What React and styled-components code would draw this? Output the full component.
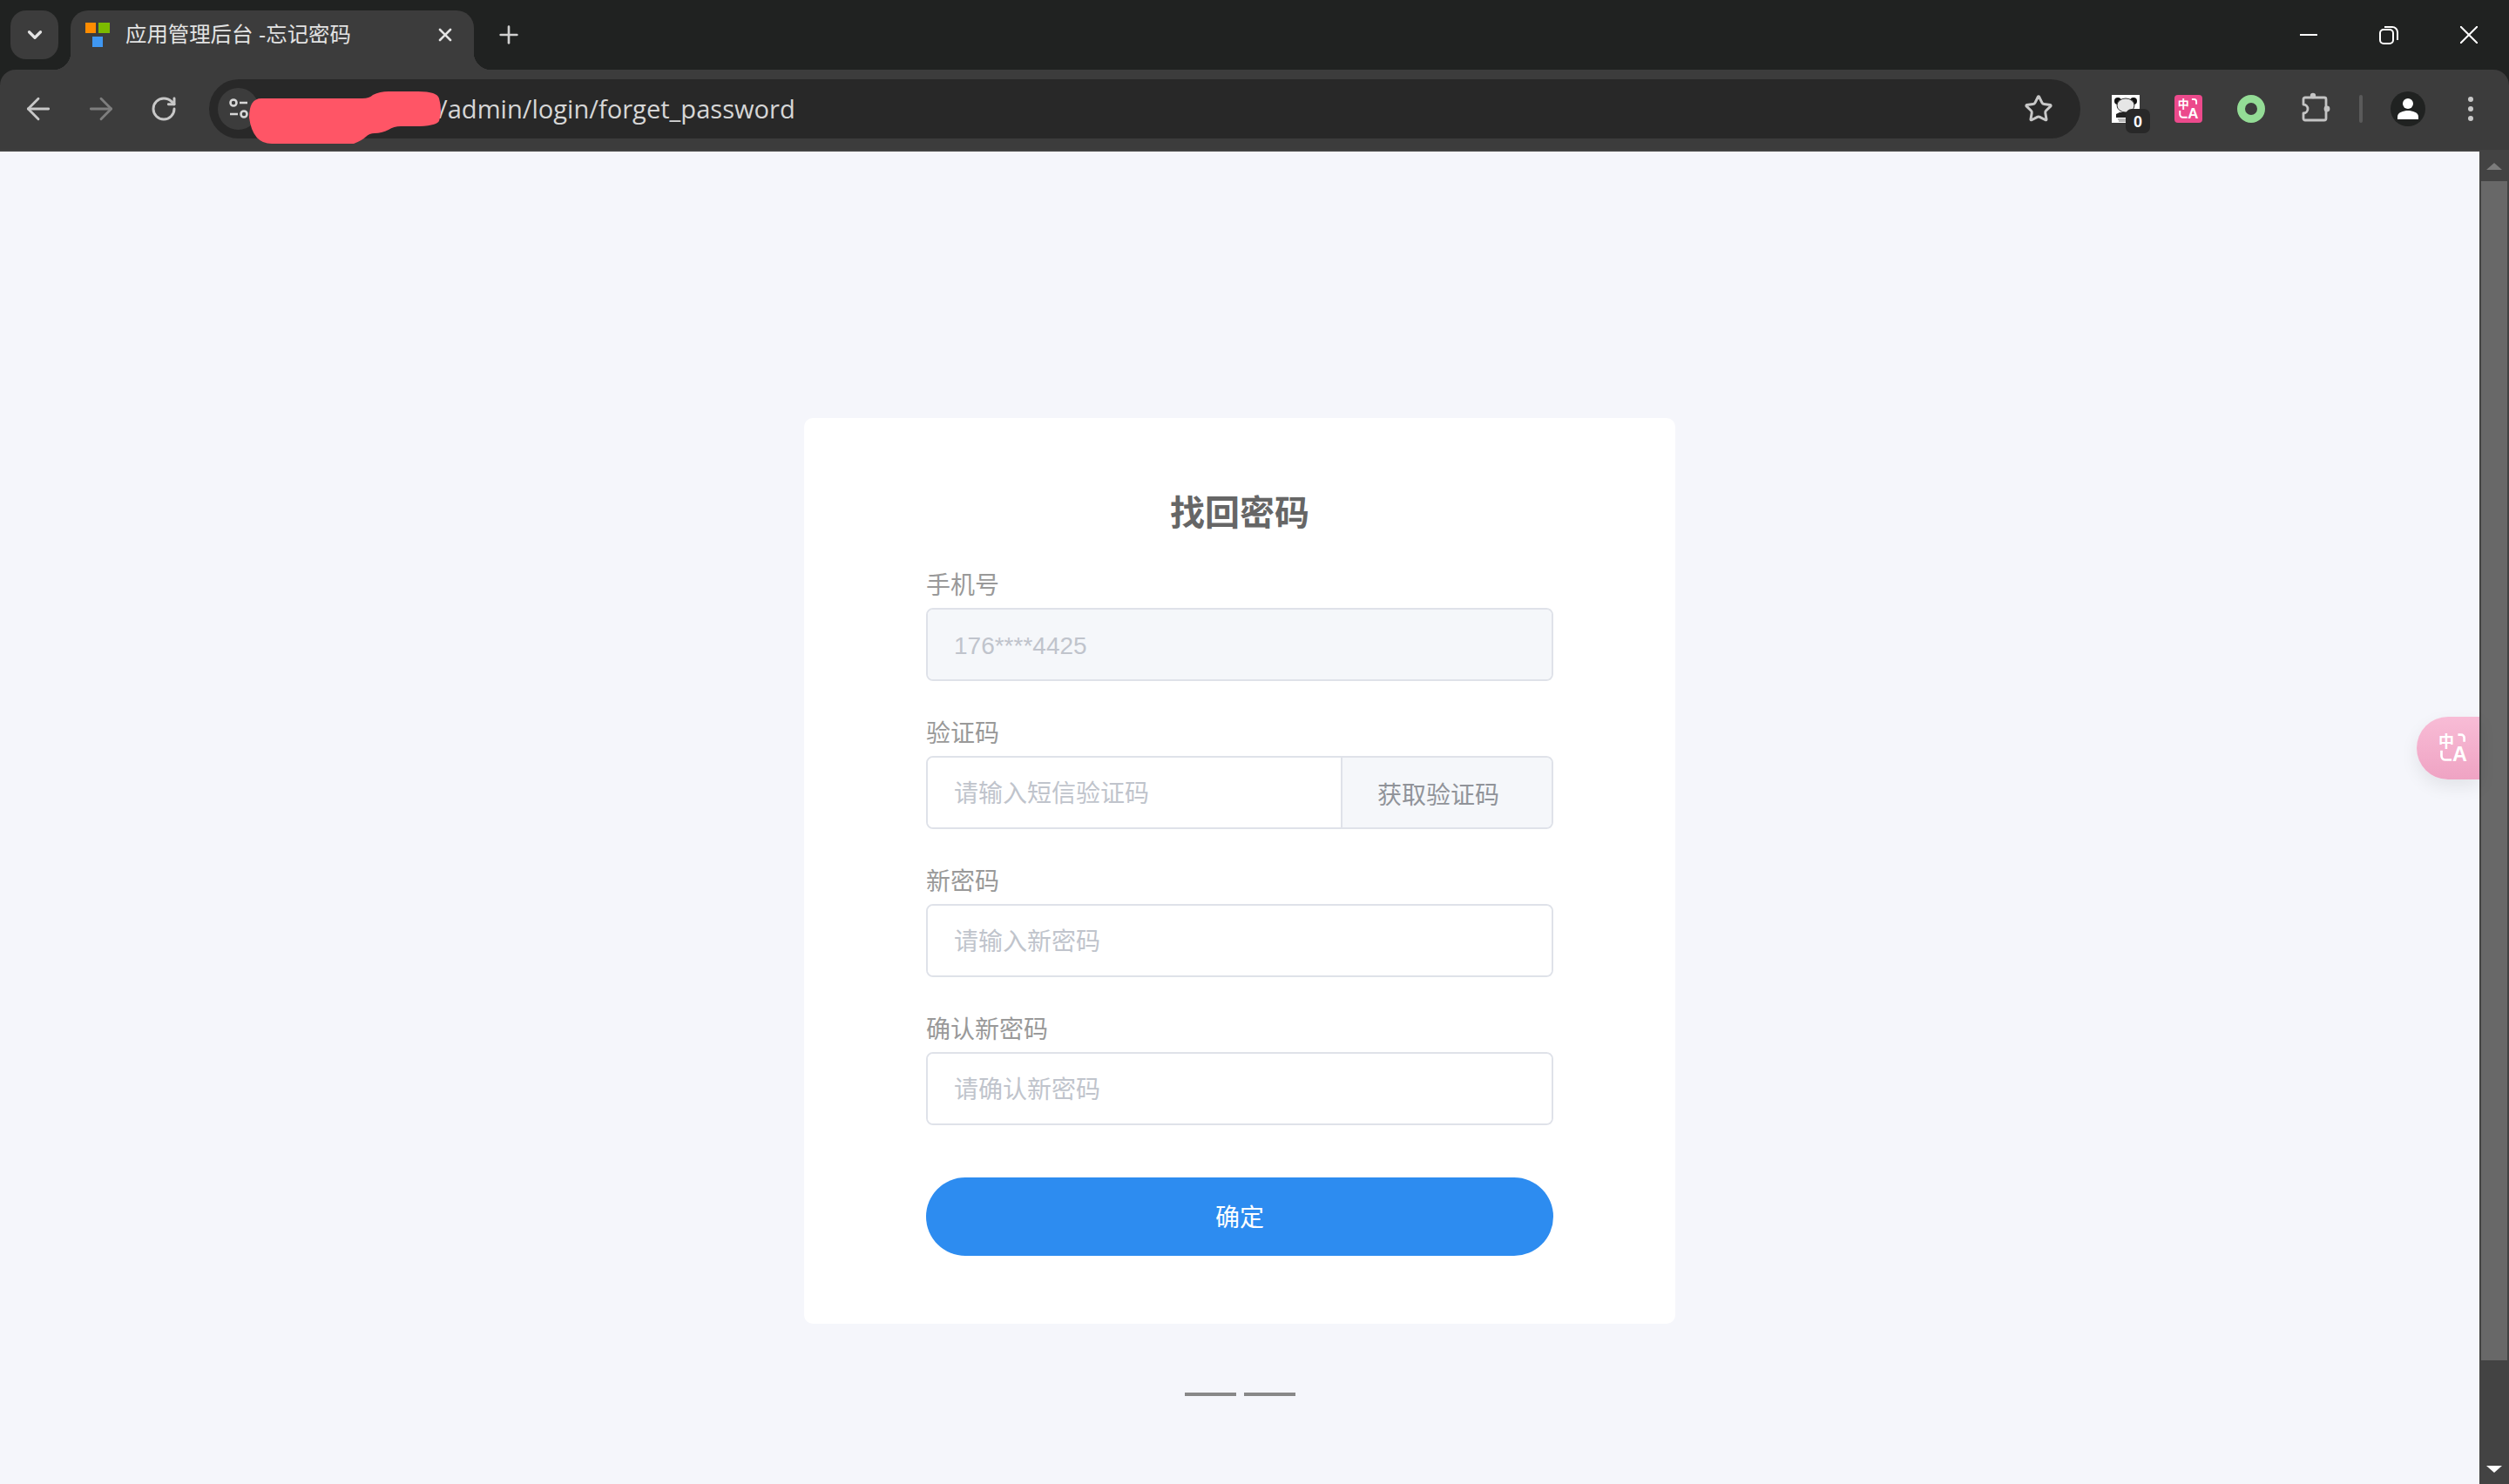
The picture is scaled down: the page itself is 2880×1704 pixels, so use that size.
import styled, { createGlobalStyle } from "styled-components";
import { ArrowLeft, ArrowRight, ChevronDown, Plus, RotateCw, Star, X } from "lucide-react";

const GlobalStyle = createGlobalStyle`
  html, body {
    margin: 0;
    padding: 0;
    background: #f5f6fb;
  }
  * {
    box-sizing: border-box;
  }
  body {
    font-family: "Liberation Sans", "Noto Sans CJK SC", sans-serif;
  }
`;

const Window = styled.div`
  display: flex;
  flex-direction: column;
  width: 2880px;
  height: 1704px;
  overflow: hidden;
  background: #202221;
`;

const TabStrip = styled.div`
  display: flex;
  align-items: flex-start;
  height: 80px;
  padding: 12px 0 0 12px;
  background: #202221;
`;

const TabSearch = styled.div`
  display: flex;
  align-items: center;
  justify-content: center;
  width: 55px;
  height: 56px;
  border-radius: 18px;
  background: #3c3c3c;
  color: #e3e3e3;
`;

const Tab = styled.div`
  position: relative;
  display: flex;
  align-items: center;
  width: 463px;
  height: 68px;
  margin-left: 14px;
  padding: 0 21px 12px 17px;
  border-radius: 20px 20px 0 0;
  background: #3c3c3c;
  color: #e3e3e3;

  &::before,
  &::after {
    content: "";
    position: absolute;
    bottom: 0;
    width: 20px;
    height: 20px;
  }
  &::before {
    left: -20px;
    background: radial-gradient(circle at 0 0, transparent 20px, #3c3c3c 20.5px);
  }
  &::after {
    right: -20px;
    background: radial-gradient(circle at 100% 0, transparent 20px, #3c3c3c 20.5px);
  }
`;

const TabTitle = styled.span`
  flex: 1;
  margin-left: 18px;
  font-size: 24.4px;
  line-height: 32px;
  white-space: nowrap;
`;

const NewTab = styled.div`
  display: flex;
  align-items: center;
  justify-content: center;
  width: 40px;
  height: 56px;
  margin-left: 20px;
  color: #d0d0d0;
`;

const WindowControls = styled.div`
  display: flex;
  margin: -12px 0 0 auto;
`;

const WindowButton = styled.div`
  display: flex;
  align-items: center;
  justify-content: center;
  width: 92px;
  height: 80px;
`;

const Toolbar = styled.div`
  display: flex;
  align-items: center;
  gap: 32px;
  height: 94px;
  padding: 0 24px 2px;
  border-radius: 18px 18px 0 0;
  background: #3c3c3c;
  border-bottom: 2px solid #434343;
`;

const IconSlot = styled.div`
  position: relative;
  display: flex;
  align-items: center;
  justify-content: center;
  flex: none;
  width: 40px;
  height: 40px;
  color: ${(p) => (p.$dim ? "#7e7e7e" : "#c8c8c8")};
`;

const Omnibox = styled.div`
  position: relative;
  display: flex;
  align-items: center;
  flex: 1;
  height: 68px;
  padding: 0 28px 0 10px;
  border-radius: 34px;
  background: #282828;
`;

const SiteChip = styled.div`
  display: flex;
  align-items: center;
  justify-content: center;
  flex: none;
  width: 47px;
  height: 48px;
  margin-right: 206px;
  border-radius: 50%;
  background: #3c3c3c;
`;

const Url = styled.span`
  flex: 1;
  color: #d6d6d6;
  font-family: "Open Sans", "Noto Sans", sans-serif;
  font-size: 29.1px;
  line-height: 40px;
`;

const Scribble = styled.svg`
  position: absolute;
  left: 46px;
  top: 14px;
`;

const Badge = styled.span`
  position: absolute;
  left: 20px;
  top: 20px;
  width: 28px;
  height: 28px;
  border-radius: 7px;
  background: #282828;
  color: #fff;
  font-size: 18px;
  font-weight: 700;
  line-height: 30px;
  text-align: center;
`;

const ExtensionTile = styled.div`
  display: flex;
  align-items: center;
  justify-content: center;
  width: 32px;
  height: 32px;
  border-radius: 4px;
  background: #ec4a8c;
`;

const Separator = styled.div`
  flex: none;
  width: 4px;
  height: 32px;
  border-radius: 2px;
  background: #5a5a5a;
`;

const Viewport = styled.div`
  display: flex;
  flex: 1;
  min-height: 0;
`;

const Page = styled.main`
  position: relative;
  display: flex;
  flex-direction: column;
  align-items: center;
  flex: 1;
  padding-top: 306px;
  background: #f5f6fb;
`;

const Card = styled.section`
  width: 1000px;
  height: 1040px;
  padding: 81px 140px 78px;
  border-radius: 10px;
  background: #fff;
`;

const Title = styled.h1`
  margin: 0 0 33px;
  color: #666;
  font-size: 40px;
  font-weight: 700;
  line-height: 56px;
  text-align: center;
`;

const Form = styled.form`
  display: flex;
  flex-direction: column;
  gap: 38px;
`;

const Field = styled.label`
  display: flex;
  flex-direction: column;
  gap: 5px;
`;

const FieldLabel = styled.span`
  padding-top: 3px;
  color: #999;
  font-size: 28px;
  line-height: 40px;
`;

const InputBox = styled.div`
  display: flex;
  height: 84px;
  border: 2px solid #dfe2e9;
  border-radius: 8px;
  overflow: hidden;
`;

const Input = styled.input`
  flex: 1;
  min-width: 0;
  height: 100%;
  padding: 3px 30px 0;
  border: 0;
  outline: 0;
  background: ${(p) => (p.disabled ? "#f5f7fa" : "#fff")};
  color: #606266;
  font-family: inherit;
  font-size: 28px;

  &::placeholder {
    color: #c0c4cc;
    opacity: 1;
  }
`;

const CodeButton = styled.button`
  flex: none;
  width: 242px;
  padding: 1px 0 0 40px;
  border: 0;
  border-left: 2px solid #dfe2e9;
  background: #f5f7fa;
  color: #909399;
  font-family: inherit;
  font-size: 28px;
  text-align: left;
`;

const Submit = styled.button`
  width: 100%;
  height: 90px;
  margin-top: 22px;
  padding: 0 0 2px;
  border: 0;
  border-radius: 45px;
  background: #2d8cf0;
  color: #fff;
  font-family: inherit;
  font-size: 28px;
`;

const Dashes = styled.div`
  display: flex;
  gap: 9px;
  margin-top: 79px;
`;

const Dash = styled.span`
  width: 59px;
  height: 4px;
  background: #888;
`;

const TranslateFab = styled.div`
  position: absolute;
  top: 649px;
  right: 0;
  display: flex;
  align-items: center;
  justify-content: center;
  width: 72px;
  height: 72px;
  padding-left: 12px;
  border-radius: 36px 0 0 36px;
  background: linear-gradient(180deg, #f8bcd6, #efa3c3);
  box-shadow: 0 8px 20px rgba(0, 0, 0, 0.08);
`;

const Scrollbar = styled.div`
  display: flex;
  flex-direction: column;
  flex: none;
  width: 34px;
  background: #434343;
`;

const ScrollButton = styled.div`
  display: flex;
  align-items: center;
  justify-content: center;
  height: 34px;
`;

const Arrow = styled.span`
  width: 0;
  height: 0;
  border-left: 9px solid transparent;
  border-right: 9px solid transparent;
  border-bottom: ${(p) => (p.$up ? "8px solid #7c7c7c" : "0")};
  border-top: ${(p) => (p.$up ? "0" : "8px solid #fff")};
`;

const ScrollTrack = styled.div`
  flex: 1;
  padding: 0 2px;
`;

const ScrollThumb = styled.div`
  height: 1354px;
  background: #686868;
`;

// 中A translate mark, shared by the extension button and the floating one
const TranslateMark = ({ size }) => (
  <svg width={size} height={size} viewBox="0 0 40 40" fill="none" overflow="visible">
    <text x="1" y="19" fontSize="20" fontWeight="700" fill="#fff" fontFamily="Noto Sans CJK SC, sans-serif">
      中
    </text>
    <text x="19" y="37" fontSize="26" fontWeight="700" fill="#fff" fontFamily="Liberation Sans, sans-serif">
      A
    </text>
    <path d="M26 3h4a4 4 0 0 1 4 4v5" stroke="#fff" strokeWidth="3" />
    <path d="M5 23v7a5 5 0 0 0 5 5h8" stroke="#fff" strokeWidth="3" />
  </svg>
);

const fields = [
  { label: "新密码", placeholder: "请输入新密码" },
  { label: "确认新密码", placeholder: "请确认新密码" },
];

const App = () => {
  return (
    <Window>
      <GlobalStyle />
      <TabStrip>
        <TabSearch>
          <ChevronDown size={26} strokeWidth={3} />
        </TabSearch>
        <Tab>
          <svg width="28" height="28" viewBox="0 0 28 28">
            <rect x="0" y="0" width="12" height="12" fill="#ff8c00" />
            <rect x="15" y="0" width="13" height="12" fill="#7cbb00" />
            <rect x="8" y="16" width="12" height="12" fill="#3f97f2" />
          </svg>
          <TabTitle>应用管理后台 -忘记密码</TabTitle>
          <X size={24} strokeWidth={2.6} />
        </Tab>
        <NewTab>
          <Plus size={32} strokeWidth={2} />
        </NewTab>
        <WindowControls>
          <WindowButton>
            <svg width="20" height="20" viewBox="0 0 20 20">
              <path d="M0 10h20" stroke="#fff" strokeWidth="2" />
            </svg>
          </WindowButton>
          <WindowButton>
            <svg width="22" height="22" viewBox="0 0 22 22" fill="none" stroke="#fff" strokeWidth="2">
              <rect x="1" y="5" width="15" height="16" rx="4" />
              <path d="M6 2h9a6 6 0 0 1 6 6v9" />
            </svg>
          </WindowButton>
          <WindowButton>
            <svg width="20" height="20" viewBox="0 0 20 20">
              <path d="M0 0l20 20M20 0L0 20" stroke="#fff" strokeWidth="2" />
            </svg>
          </WindowButton>
        </WindowControls>
      </TabStrip>

      <Toolbar>
        <IconSlot>
          <ArrowLeft size={40} strokeWidth={1.7} />
        </IconSlot>
        <IconSlot $dim>
          <ArrowRight size={40} strokeWidth={1.7} />
        </IconSlot>
        <IconSlot>
          <RotateCw size={32} strokeWidth={2.2} />
        </IconSlot>
        <Omnibox>
          <SiteChip>
            <svg width="24" height="28" viewBox="0 0 24 28" fill="none" stroke="#d6d6d6" strokeWidth="2.6">
              <circle cx="6" cy="7" r="3.5" />
              <path d="M13 7h9M2 20h9" />
              <circle cx="18" cy="20" r="3.5" />
            </svg>
          </SiteChip>
          <Url>/admin/login/forget_password</Url>
          <Scribble width="222" height="60" viewBox="0 0 222 60">
            <path
              d="M14 8h116q8 0 12-4 8-4 18-4h34q22 0 24 8 4 14 0 26-4 6-28 6h-16q-8 0-14 4-8 4-16 4-6 0-10 4-4 4-14 8H26Q4 60 0 30 0 8 14 8z"
              fill="#ff5566"
            />
          </Scribble>
          <IconSlot>
            <Star size={34} strokeWidth={2.1} />
          </IconSlot>
        </Omnibox>
        <IconSlot>
          <svg width="32" height="32" viewBox="0 0 32 32">
            <rect width="32" height="32" fill="#fff" />
            <circle cx="7" cy="7" r="4" fill="#111" />
            <circle cx="25" cy="7" r="4" fill="#111" />
            <ellipse cx="16" cy="12" rx="10" ry="8" fill="#e6e6e6" stroke="#333" />
            <path d="M9 20h14v6H5v-4z" fill="#222" />
            <path d="M7 28h18M8 30h16" stroke="#777" />
          </svg>
          <Badge>0</Badge>
        </IconSlot>
        <IconSlot>
          <ExtensionTile>
            <TranslateMark size={26} />
          </ExtensionTile>
        </IconSlot>
        <IconSlot>
          <svg width="32" height="32" viewBox="0 0 32 32">
            <circle cx="16" cy="16" r="11.5" fill="none" stroke="#94dc96" strokeWidth="9" />
          </svg>
        </IconSlot>
        <IconSlot>
          <svg width="40" height="40" viewBox="0 0 40 40">
            <path
              d="M10 7h22a2 2 0 0 1 2 2v22a2 2 0 0 1-2 2H10a2 2 0 0 1-2-2v-6a5 5 0 0 0 0-10V9a2 2 0 0 1 2-2z"
              fill="none"
              stroke="#c4c4c4"
              strokeWidth="2.8"
              strokeLinejoin="round"
            />
            <circle cx="19" cy="5" r="3.2" fill="#c4c4c4" />
            <circle cx="35" cy="20" r="3.4" fill="#c4c4c4" />
          </svg>
        </IconSlot>
        <Separator />
        <IconSlot>
          <svg width="40" height="40" viewBox="0 0 40 40">
            <circle cx="20" cy="20" r="20" fill="#202221" />
            <circle cx="20" cy="14" r="6" fill="#fff" />
            <path d="M8 32v-3c0-5 7-7 12-7s12 2 12 7v3z" fill="#fff" />
          </svg>
        </IconSlot>
        <IconSlot>
          <svg width="8" height="32" viewBox="0 0 8 32" fill="#c8c8c8">
            <circle cx="4" cy="5" r="3" />
            <circle cx="4" cy="16" r="3" />
            <circle cx="4" cy="27" r="3" />
          </svg>
        </IconSlot>
      </Toolbar>

      <Viewport>
        <Page>
          <Card>
            <Title>找回密码</Title>
            <Form>
              <Field>
                <FieldLabel>手机号</FieldLabel>
                <InputBox>
                  <Input disabled placeholder="176****4425" />
                </InputBox>
              </Field>
              <Field>
                <FieldLabel>验证码</FieldLabel>
                <InputBox>
                  <Input placeholder="请输入短信验证码" />
                  <CodeButton type="button">获取验证码</CodeButton>
                </InputBox>
              </Field>
              {fields.map((field) => (
                <Field key={field.label}>
                  <FieldLabel>{field.label}</FieldLabel>
                  <InputBox>
                    <Input type="password" placeholder={field.placeholder} />
                  </InputBox>
                </Field>
              ))}
              <Submit type="button">确定</Submit>
            </Form>
          </Card>
          <Dashes>
            <Dash />
            <Dash />
          </Dashes>
          <TranslateFab>
            <TranslateMark size={36} />
          </TranslateFab>
        </Page>
        <Scrollbar>
          <ScrollButton>
            <Arrow $up />
          </ScrollButton>
          <ScrollTrack>
            <ScrollThumb />
          </ScrollTrack>
          <ScrollButton>
            <Arrow />
          </ScrollButton>
        </Scrollbar>
      </Viewport>
    </Window>
  );
};

export default App;
